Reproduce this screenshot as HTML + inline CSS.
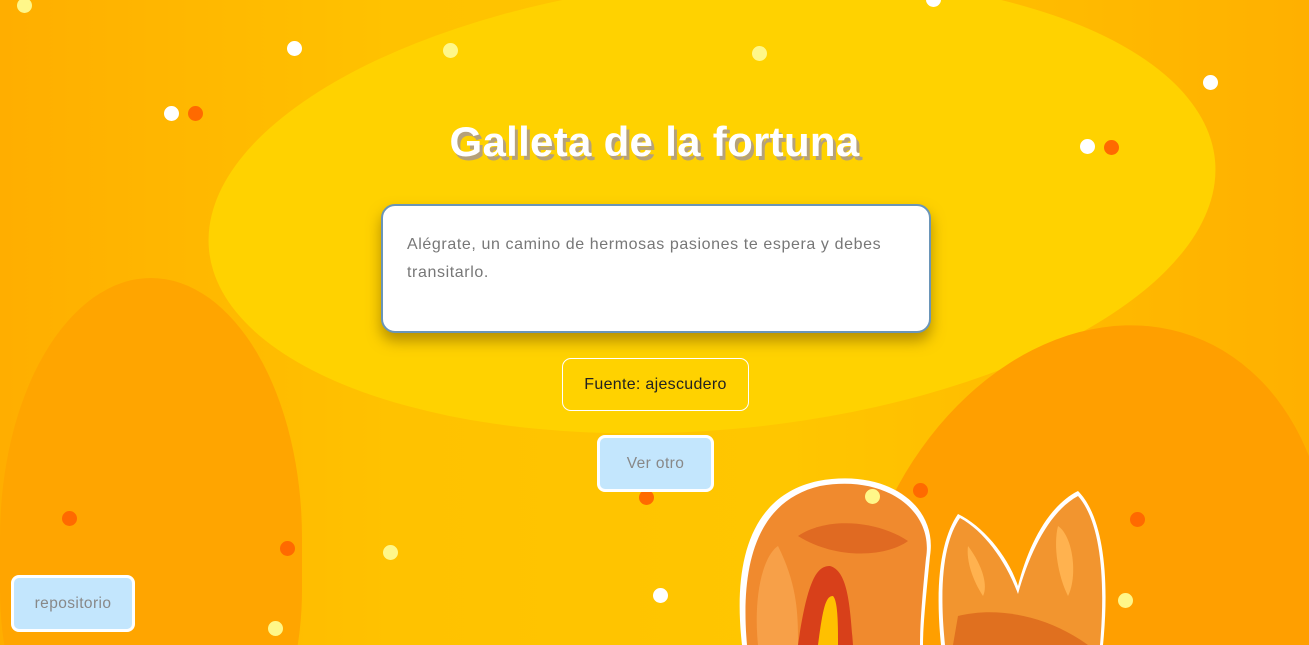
<!DOCTYPE html>
<html><head><meta charset="utf-8"><style>
*{margin:0;padding:0;box-sizing:border-box}
html,body{width:1309px;height:645px;overflow:hidden}
#wrap{position:relative;width:1309px;height:645px;overflow:hidden;font-family:"Liberation Sans",sans-serif;background:linear-gradient(90deg,#ffae00 0%,#ffc200 30%,#ffc600 60%,#ffb000 100%)}
.blob{position:absolute;border-radius:50%}
.dot{position:absolute;border-radius:50%;width:15px;height:15px}
.w{background:#fff}.y{background:#fff789}.o{background:#ff6a00}
h1{position:absolute;top:118px;left:0;width:1309px;text-align:center;color:#fff;font-size:42px;font-weight:bold;letter-spacing:0.3px;text-shadow:3px 4px 0 #b5a17a}
.card{position:absolute;left:381px;top:204px;width:550px;height:129px;background:#fff;border:2px solid #6a95b8;border-radius:14px;box-shadow:0 8px 14px rgba(120,90,0,.55);padding:25px 24px;color:#777;font-size:16px;letter-spacing:0.6px;line-height:28px}
.src{position:absolute;left:562px;top:358px;width:187px;height:53px;border:1px solid #fff;border-radius:9px;color:#222;font-size:16px;letter-spacing:0.3px;text-align:center;line-height:51px}
.btn{position:absolute;background:#c3e6fd;border:3px solid #fff;border-radius:8px;color:#888;font-size:15.5px;letter-spacing:0.4px;text-align:center}
</style></head><body><div id="wrap">
<div class="blob" style="left:207px;top:-20px;width:1010px;height:450px;background:#ffd200;transform:rotate(-5deg)"></div>
<div class="blob" style="left:0;top:278px;width:302px;height:520px;background:#ffa500;border-radius:50% 50% 40% 40%"></div>
<div class="blob" style="left:860px;top:318px;width:460px;height:600px;background:#ff9f00;transform:rotate(20deg)"></div>
<svg style="position:absolute;left:738px;top:476px" width="380" height="169" viewBox="0 0 380 169">
<path d="M4 169 C-5 90 10 20 80 5 C150 -8 200 30 192 80 C188 120 185 150 185 169Z" fill="#fff"/>
<path d="M9 169 C2 90 18 25 82 10 C148 -2 196 35 188 82 C184 122 182 150 182 169Z" fill="#f08a2e"/>
<path d="M20 169 C15 120 25 80 40 70 C60 110 60 140 60 169Z" fill="#f7a048"/>
<path d="M60 169 C70 100 80 90 92 90 C110 95 112 130 115 169Z" fill="#d8401a"/>
<path d="M80 169 C85 130 88 120 95 120 C100 125 100 150 100 169Z" fill="#ffc000"/>
<path d="M60 60 C90 40 140 45 170 65 C150 80 100 85 60 60Z" fill="#e06a22"/>
<path d="M203 169 C196 100 205 60 220 38 C245 50 270 80 280 110 C290 70 310 30 340 15 C365 40 372 100 365 169Z" fill="#fff"/>
<path d="M207 169 C200 100 208 62 222 42 C246 55 268 85 280 118 C292 75 312 35 340 20 C362 45 368 100 362 169Z" fill="#f2952f"/>
<path d="M220 140 C260 130 310 140 350 169 L215 169Z" fill="#e0701f"/>
<path d="M320 50 C335 60 340 100 330 120 C320 100 315 70 320 50Z" fill="#ffb24f"/>
<path d="M230 70 C245 90 250 110 245 120 C235 105 228 85 230 70Z" fill="#ffb24f"/>
</svg>
<div class="dot y" style="left:17px;top:-2px"></div>
<div class="dot w" style="left:287px;top:41px"></div>
<div class="dot y" style="left:443px;top:43px"></div>
<div class="dot y" style="left:752px;top:46px"></div>
<div class="dot w" style="left:164px;top:106px"></div>
<div class="dot o" style="left:188px;top:106px"></div>
<div class="dot w" style="left:1203px;top:75px"></div>
<div class="dot w" style="left:1080px;top:139px"></div>
<div class="dot o" style="left:1104px;top:140px"></div>
<div class="dot w" style="left:926px;top:-8px"></div>
<div class="dot o" style="left:62px;top:511px"></div>
<div class="dot o" style="left:280px;top:541px"></div>
<div class="dot y" style="left:383px;top:545px"></div>
<div class="dot y" style="left:268px;top:621px"></div>
<div class="dot w" style="left:653px;top:588px"></div>
<div class="dot o" style="left:639px;top:490px"></div>
<div class="dot y" style="left:865px;top:489px"></div>
<div class="dot o" style="left:913px;top:483px"></div>
<div class="dot o" style="left:1130px;top:512px"></div>
<div class="dot y" style="left:1118px;top:593px"></div>
<h1>Galleta de la fortuna</h1>
<div class="card">Alégrate, un camino de hermosas pasiones te espera y debes transitarlo.</div>
<div class="src">Fuente: ajescudero</div>
<div class="btn" style="left:597px;top:435px;width:117px;height:57px;line-height:51px">Ver otro</div>
<div class="btn" style="left:11px;top:575px;width:124px;height:57px;line-height:51px">repositorio</div>
</div></body></html>
